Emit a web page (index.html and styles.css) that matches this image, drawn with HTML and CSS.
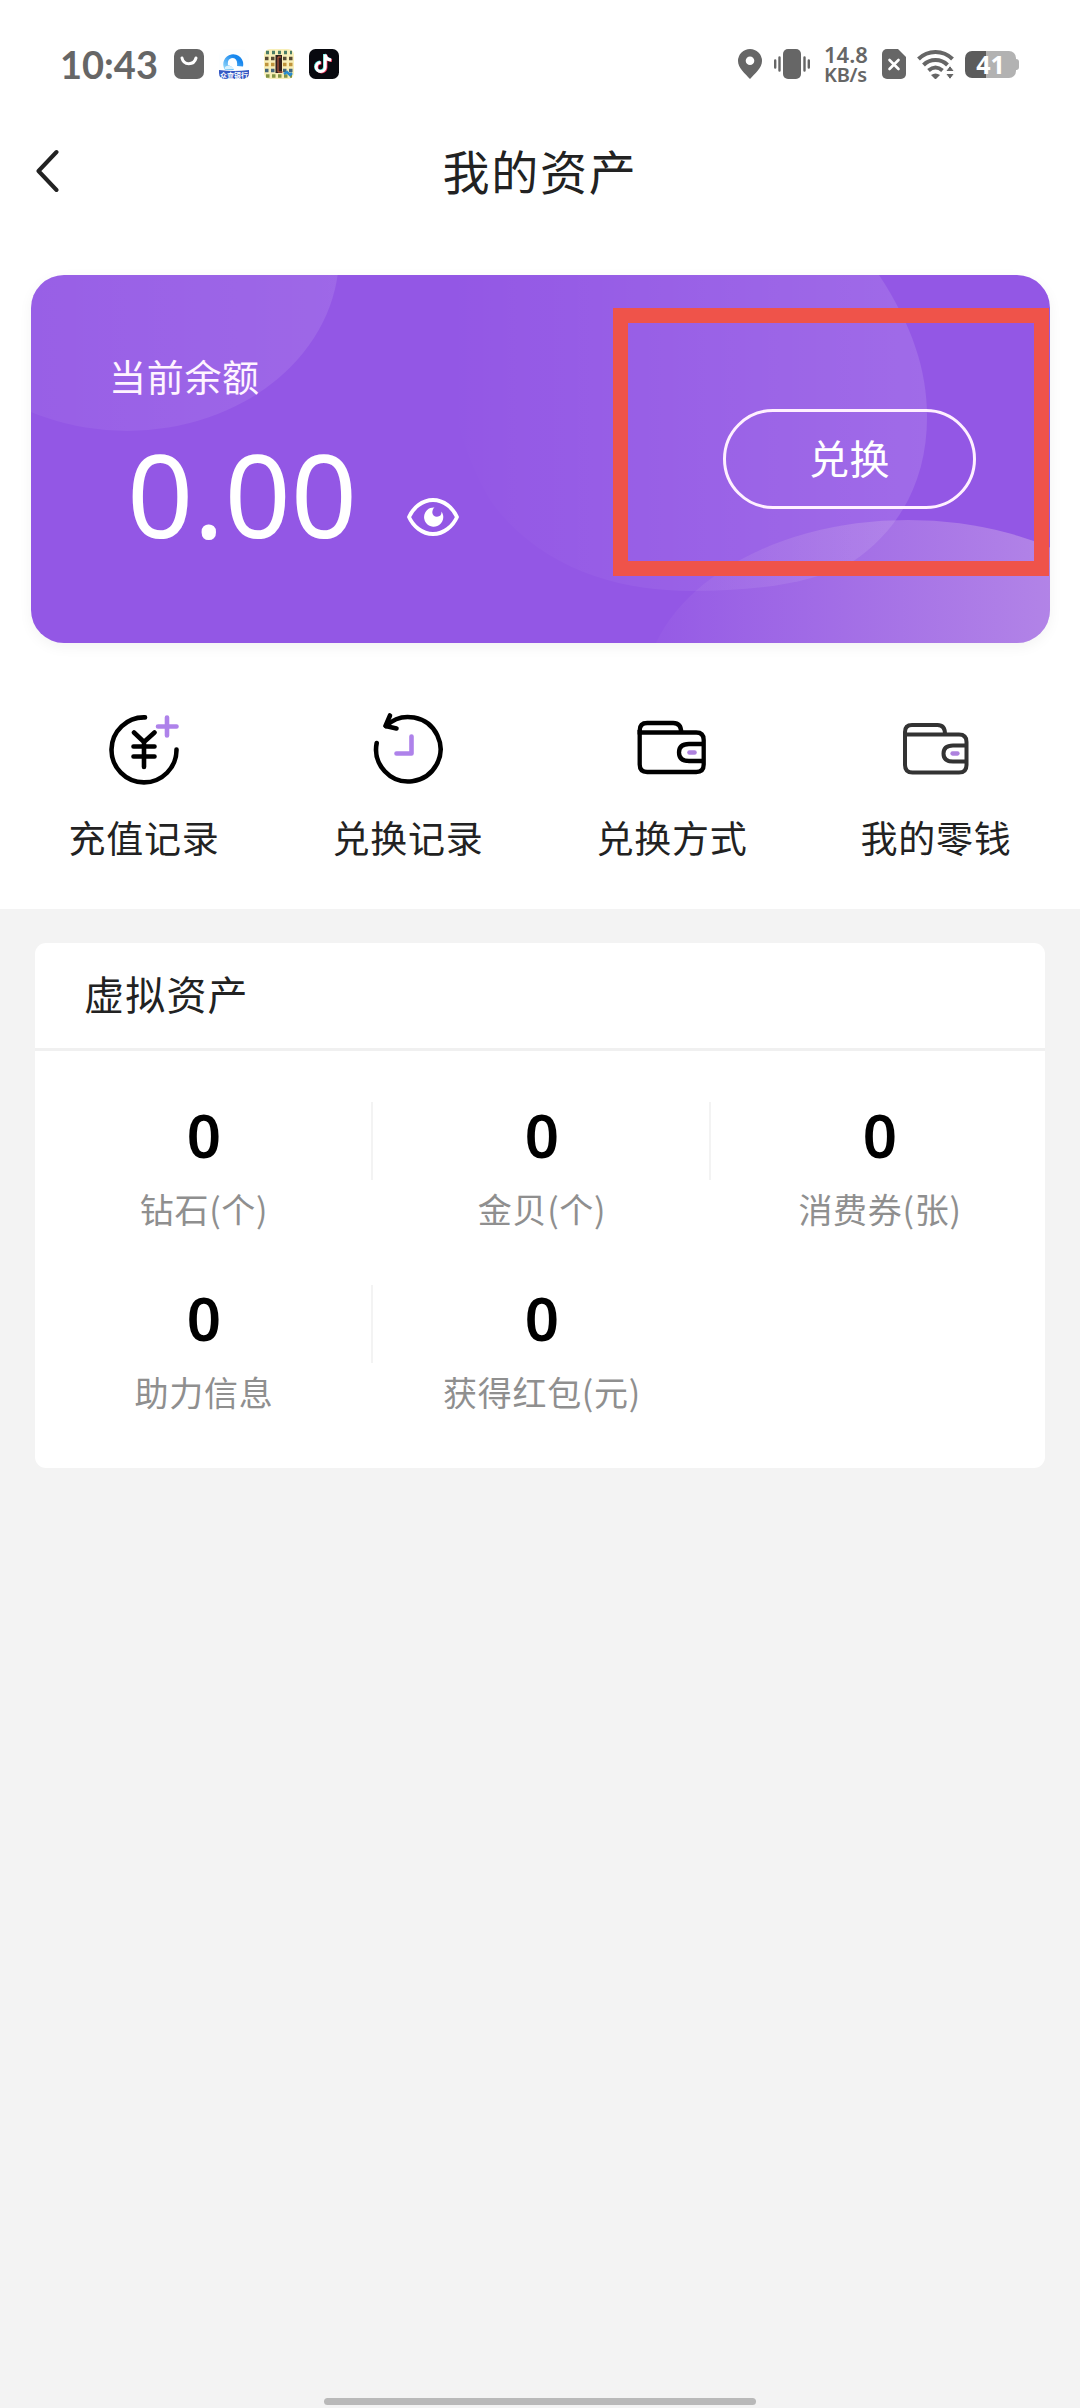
FILE: index.html
```html
<!DOCTYPE html>
<html lang="zh-CN">
<head>
<meta charset="utf-8">
<title>我的资产</title>
<link rel="stylesheet" href="styles.css">
</head>
<body>
<div class="screen">
  <div class="top">
    <div class="status">
      <div class="status-left">
        <span class="time">10:43</span>
        <svg width="30" height="30" viewBox="0 0 30 30"><rect width="30" height="30" rx="7" fill="#666"/><path d="M8 9c1.500 7.500 12 7.500 14 0" fill="none" stroke="#fff" stroke-width="3" stroke-linecap="round"/></svg>
        <svg width="30" height="30" viewBox="0 0 30 30">
          <defs><linearGradient id="q" x1="1" y1="0" x2="0" y2="1"><stop offset=".3" stop-color="#1787ee"/><stop offset="1" stop-color="#9fe0fb"/></linearGradient></defs>
          <rect width="30" height="30" rx="7" fill="#fcfeff"/>
          <path d="M6 21A10 10 0 1 1 24 17.500L18 17Q19 9 13 9Q8 10 9 16Q13 17 15 21Z" fill="url(#q)"/>
          <path d="M6 18q4-4 9 2h-9z" fill="#d9f2fd"/>
          <path d="M0 21q15 2 30 0v3q0 6-7 6H7q-7 0-7-6z" fill="#3558c4"/>
          <text x="15" y="28.500" class="badge">众查银行</text>
        </svg>
        <svg width="30" height="30" viewBox="0 0 30 30">
          <rect width="30" height="30" rx="6" fill="#f8efb8"/>
          <g stroke-width="3.400" fill="none">
            <path d="M2 3.500h26" stroke="#4b7d66" stroke-dasharray="3 3"/>
            <path d="M1 9.500h28" stroke="#574b35" stroke-dasharray="3.500 2.500"/>
            <path d="M1 15.500h28" stroke="#bf943c" stroke-dasharray="3.500 2.500"/>
            <path d="M1 21.500h28" stroke="#44667a" stroke-dasharray="3.500 2.500"/>
            <path d="M2 27h26" stroke="#829443" stroke-dasharray="3.500 2.500"/>
          </g>
          <rect x="11.500" y="6" width="6.500" height="18" fill="#30201d"/><path d="M17 8h-3v15h5" fill="none" stroke="#cf6544"/>
          <path d="M20 25l3-2 3 3 2-2" fill="none" stroke="#278bd0" stroke-width="2.500"/>
        </svg>
        <svg width="30" height="30" viewBox="0 0 30 30"><rect width="30" height="30" rx="6.500" fill="#08090f"/>
          <g fill="none" stroke-width="3"><path d="M17 6v12.500a4.500 4.500 0 1 1-4.500-4.500M17 6q.5 5 6 5.500" stroke="#ee3159"/><path d="M15.500 5v12.500a4.500 4.500 0 1 1-4.500-4.500M15.500 5q.5 5 6 5.500" stroke="#4fe4df"/><path d="M16.200 5.500v12.500a4.500 4.500 0 1 1-4.500-4.500M16.200 5.500q.5 5 6 5.500" stroke="#fff"/></g></svg>
      </div>
      <div class="status-right">
        <svg width="24" height="30" viewBox="0 0 24 30"><path fill-rule="evenodd" d="M12 0a12 12 0 0 1 12 12c0 7-7 12.500-12 18C7 24.500 0 19 0 12A12 12 0 0 1 12 0zm0 7.500a4.300 4.300 0 1 0 0 8.600 4.300 4.300 0 0 0 0-8.600z" fill="#666"/></svg>
        <svg width="36" height="30" viewBox="0 0 36 30"><rect x="9" width="18" height="30" rx="5" fill="#666"/><path d="M5.500 8.500v13M1.200 11.500v7M30.500 8.500v13M34.800 11.500v7" stroke="#666" stroke-width="2.400" stroke-linecap="round"/></svg>
        <span class="speed"><span class="rate">14.8</span><span class="unit">KB/s</span></span>
        <svg width="24" height="30" viewBox="0 0 24 30"><path d="M5 0h11l8 8v17a5 5 0 0 1-5 5H5a5 5 0 0 1-5-5V5a5 5 0 0 1 5-5z" fill="#666"/><path d="M7.500 11l9 9m0-9l-9 9" stroke="#fff" stroke-width="2.600" stroke-linecap="round"/></svg>
        <svg class="wifi" width="38" height="30" viewBox="0 0 38 30"><g fill="none" stroke="#666" stroke-width="4"><path d="M1.500 10a24 24 0 0 1 34 0"/><path d="M6.500 16a17 17 0 0 1 24 0"/><path d="M11.500 21.500q7-6 14 0"/></g><path d="M14 26q4.500-3 9 0l-4.500 4.500z" fill="#666"/><path d="M33 16.500l4.500 6h-9zM33 30.500l4.500-6h-9z" fill="#666" stroke="#fff" stroke-width="1"/></svg>
        <span class="battery"><span class="level">41</span></span>
      </div>
    </div>
    <div class="nav">
      <svg class="back" width="24" height="44" viewBox="0 0 24 44"><path d="M21.500 3L3.500 22 21.500 41" fill="none" stroke="#222" stroke-width="4" stroke-linecap="round" stroke-linejoin="round"/></svg>
      <h1 class="title">我的资产</h1>
    </div>
    <div class="balance">
      <svg class="waves" width="1019" height="368" viewBox="31 275 1019 368">
        <defs>
          <linearGradient id="a"><stop offset="0" stop-color="#fff" stop-opacity=".03"/><stop offset="1" stop-color="#fff" stop-opacity=".1"/></linearGradient>
          <linearGradient id="b"><stop offset="0" stop-color="#fff" stop-opacity="0"/><stop offset="1" stop-color="#fff" stop-opacity=".12"/></linearGradient>
          <linearGradient id="c" gradientUnits="userSpaceOnUse" x1="650" y1="0" x2="1050" y2="0"><stop offset="0" stop-color="#fdf0ec" stop-opacity=".02"/><stop offset="1" stop-color="#fdf0ec" stop-opacity=".29"/></linearGradient>
        </defs>
        <ellipse cx="127" cy="255" rx="212" ry="176" fill="url(#a)"/>
        <path d="M879 275C912 325 927 370 927 417C927 480 900 530 852 562C810 585 750 591 691 591C620 591 540 570 490 500C455 440 435 360 455 275Z" fill="url(#b)"/>
        <ellipse cx="908" cy="695" rx="264" ry="175" fill="url(#c)"/>
      </svg>
      <div class="amount-block">
        <div class="caption">当前余额</div>
        <div class="amount-row">
          <span class="amount">0.00</span>
          <svg width="54" height="40" viewBox="0 0 54 40"><path d="M3 20C7 11 16 3 27 3s20 8 24 17c-4 9-13 17-24 17S7 29 3 20z" fill="none" stroke="#fff" stroke-width="3.800" stroke-linejoin="round"/><path d="M28.500 10.500a9.600 9.600 0 1 0 7 4q.3 5-4.500 5.300a4.600 4.600 0 0 1-4.700-4.800q.2-3 2.200-4.500z" fill="#fff"/></svg>
        </div>
      </div>
      <button class="exchange">兑换</button>
      <div class="highlight"></div>
    </div>
    <div class="actions">
      <div class="action">
        <svg width="80" height="80" viewBox="0 0 80 80"><path d="M41 7.400A32.500 32.500 0 1 0 72.500 39.500" fill="none" stroke="#000" stroke-width="4.600" stroke-linecap="round"/><path d="M30 22.500L40 32 50.500 22.500M40 32v25M29.500 36.500h21M29.500 46.500h21" fill="none" stroke="#000" stroke-width="4.600" stroke-linecap="round" stroke-linejoin="round"/><path d="M63 7.500v18M54 16.500h18.500" stroke="#ae82ea" stroke-width="4.600" stroke-linecap="round"/></svg>
        <span>充值记录</span>
      </div>
      <div class="action">
        <svg width="80" height="80" viewBox="0 0 80 80"><path d="M8.700 33A32.200 32.200 0 1 0 18 16" fill="none" stroke="#000" stroke-width="4.600" stroke-linecap="round"/><path d="M22 5.500L17.500 16 28.500 18.500" fill="none" stroke="#000" stroke-width="4.600" stroke-linecap="round" stroke-linejoin="round"/><path d="M43.500 26.500v17H28.500" fill="none" stroke="#ae82ea" stroke-width="4.600" stroke-linecap="round" stroke-linejoin="round"/></svg>
        <span>兑换记录</span>
      </div>
      <div class="action">
        <svg width="80" height="80" viewBox="0 0 80 80"><g fill="none" stroke="#000" stroke-width="4.300"><path d="M7.700 24.500v-4q0-7.500 7.500-7.500h26q8 0 8 9.500"/><path d="M7.700 20v34.500q0 7.500 7.500 7.500h49q7.500 0 7.500-7.500V30q0-7.500-7.500-7.500H7.700"/><path d="M71.500 34H57q-10 0-10 8.500t10 8.500h14.500"/></g><path d="M57.500 42.500h5" stroke="#ae82de" stroke-width="4.600" stroke-linecap="round"/></svg>
        <span>兑换方式</span>
      </div>
      <div class="action">
        <svg width="80" height="80" viewBox="0 0 80 80"><g fill="none" stroke="#333" stroke-width="4"><path d="M9 26v-4q0-7 7-7h25.500q7.500 0 7.500 9"/><path d="M9 22v33q0 7.500 7.500 7.500h46.500q7.500 0 7.500-7.500V32q0-7.500-7.500-7.500H9"/><path d="M70.500 35.500H57q-9.500 0-9.500 8t9.500 8h13.500"/></g><path d="M56.500 43.500h5" stroke="#ae82de" stroke-width="4.300" stroke-linecap="round"/></svg>
        <span>我的零钱</span>
      </div>
    </div>
  </div>
  <div class="assets">
    <h2 class="assets-title">虚拟资产</h2>
    <div class="grid">
      <div class="cell ruled"><b>0</b><span>钻石(个)</span></div>
      <div class="cell ruled"><b>0</b><span>金贝(个)</span></div>
      <div class="cell"><b>0</b><span>消费券(张)</span></div>
      <div class="cell ruled"><b>0</b><span>助力信息</span></div>
      <div class="cell"><b>0</b><span>获得红包(元)</span></div>
    </div>
  </div>
  <div class="home-bar"></div>
</div>
</body>
</html>
```
FILE: styles.css
```css
* { box-sizing: border-box; }
body { margin: 0; background: #f3f3f3; color: #222; font-family: "Noto Sans CJK SC", sans-serif; }
svg { display: block; flex: none; }
.screen { width: 1080px; height: 2408px; display: flex; flex-direction: column; overflow: hidden; }
.top { height: 909px; background: #fff; flex: none; }

.status { height: 128px; padding: 0 64px 0 60px; display: flex; justify-content: space-between; align-items: center; }
.status-left { display: flex; align-items: center; gap: 15px; }
.time { width: 99px; font: 700 38px/40px Lato, sans-serif; color: #666; white-space: nowrap; }
.badge { font: 700 7px "Noto Sans CJK SC", sans-serif; fill: #fff; text-anchor: middle; }
.status-right { display: flex; align-items: center; }
.status-right svg:nth-child(2) { margin-left: 12px; }
.speed { width: 46px; margin: 0 12px 0 14px; display: flex; flex-direction: column; gap: 1px; font: 600 22px/19px "Noto Sans", sans-serif; color: #666; }
.rate { font-size: 22px; line-height: 19px; }
.unit { font-size: 20px; line-height: 19px; letter-spacing: -.3px; }
.wifi { margin-left: 11px; }
.battery { width: 51px; height: 27px; margin-left: 10px; border-radius: 7px; background: linear-gradient(90deg, #5c5c5c 21px, #b2b2b2 21px); position: relative; text-align: center; }
.battery::after { content: ""; position: absolute; left: 51px; top: 8px; width: 3px; height: 11px; border-radius: 0 3px 3px 0; background: #b2b2b2; }
.level { font: 700 25px/27px "Noto Sans", sans-serif; color: #fff; display: block; }

.nav { height: 88px; padding-left: 35px; display: flex; align-items: center; }
.back { margin-top: -2px; }
.title { flex: 1; margin: -4px 59px 0 0; text-align: center; font-size: 47px; line-height: 84px; font-weight: 400; letter-spacing: 1.700px; }

.balance { position: relative; margin: 59px 30px 0 31px; height: 368px; border-radius: 33px; background: #9357e5; box-shadow: 0 4px 14px rgba(0,0,0,.05); display: flex; justify-content: space-between; padding: 0 74px 0 78px; }
.waves { position: absolute; inset: 0; border-radius: 33px; }
.amount-block { position: relative; padding-top: 73px; }
.caption { font-size: 37px; line-height: 56px; letter-spacing: .700px; color: #fff4ff; }
.amount-row { display: flex; align-items: flex-end; gap: 49px; padding: 24px 0 0 18px; }
.amount-row svg { margin-bottom: 21px; }
.amount { font: 400 116px/130px "Noto Sans", sans-serif; color: #fff; }
.exchange { position: relative; width: 253px; height: 100px; margin-top: 134px; padding: 0 0 3px; border: 3px solid #fff0ff; border-radius: 50px; background: none; color: #fff; font: 400 40px/91px "Noto Sans CJK SC", sans-serif; letter-spacing: .600px; }
.highlight { position: absolute; left: 582px; top: 33px; width: 436px; height: 268px; border: 15.500px solid #ef534a; }

.actions { display: grid; grid-template-columns: repeat(4, 264px); padding: 67px 12px 0; }
.action { display: flex; flex-direction: column; align-items: center; gap: 19px; font-size: 37px; line-height: 56px; letter-spacing: .700px; }

.assets { width: 1010px; height: 525px; margin: 34px 0 0 35px; border-radius: 11px; background: #fff; flex: none; }
.assets-title { margin: 0; height: 108px; padding-left: 49px; border-bottom: 3px solid #f0f0f0; font-size: 40px; line-height: 100px; font-weight: 400; letter-spacing: 1.200px; }
.grid { display: grid; grid-template-columns: repeat(3, 338px); grid-auto-rows: 183px; padding-top: 51px; }
.cell { display: flex; flex-direction: column; align-items: center; }
.ruled { background: linear-gradient(#f3f3f3, #f3f3f3) right top / 2px 78px no-repeat; }
.cell b { font: 600 60px/66px "Noto Sans", sans-serif; color: #000; }
.cell span { margin-top: 16px; font-size: 34px; line-height: 50px; letter-spacing: .700px; color: #8f8f8f; }

.home-bar { width: 432px; height: 7px; margin: auto auto 3px; border-radius: 4px; background: #b9b9b9; }
```
